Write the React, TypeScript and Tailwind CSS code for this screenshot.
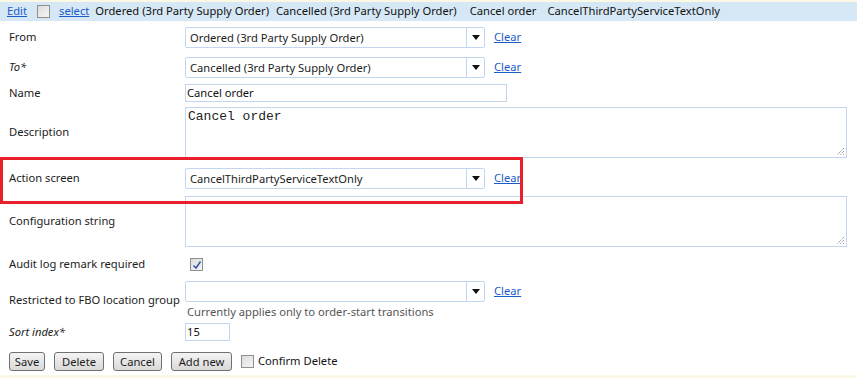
import React from 'react';

const font = { fontFamily: '"Noto Sans", "Open Sans", sans-serif' };

const Check = ({ checked = false }: { checked?: boolean }) => (
  <span className="inline-flex h-[13px] w-[13px] items-center justify-center border border-[#8f8f8f] bg-gradient-to-br from-[#dcdcdc] to-[#f6f6f6]">
    {checked && (
      <svg width="10" height="10" viewBox="0 0 10 10">
        <path d="M1.5 5.5 L4 8 L8.5 1.5" fill="none" stroke="#3a56a8" strokeWidth="1.6" />
      </svg>
    )}
  </span>
);

const ClearLink = () => <a className="ml-[9px] text-[11.2px] text-[#1a5cc8] underline">Clear</a>;

const Select = ({ value }: { value: string }) => (
  <div className="flex items-center">
    <div className="flex h-[21px] w-[300px] items-stretch rounded-[2px] border border-[#c3d6ef] bg-white">
      <span className="flex-1 truncate pl-[4px] text-[11.2px] leading-[19px] text-[#1c1c1c]">{value}</span>
      <span className="flex w-[18px] items-center justify-center border-l border-[#c3d6ef]">
        <svg width="8" height="5" viewBox="0 0 8 5">
          <path d="M0 0 H8 L4 5 Z" fill="#111" />
        </svg>
      </span>
    </div>
    <ClearLink />
  </div>
);

const Resize = () => (
  <svg className="absolute bottom-[1px] right-[1px]" width="9" height="9" viewBox="0 0 9 9">
    <path d="M8 1 L1 8 M8 4 L4 8 M8 7 L7 8" stroke="#777" strokeWidth="1" strokeDasharray="1 1" />
  </svg>
);

const TextArea = ({ value }: { value?: string }) => (
  <div className="relative h-[51px] w-[662px] border border-[#c3d6ef] bg-white">
    {value && (
      <span className="absolute left-[2px] top-[1px] text-[13px] leading-[16px] text-[#222]" style={{ fontFamily: '"Liberation Mono", monospace' }}>
        {value}
      </span>
    )}
    <Resize />
  </div>
);

const Row = ({ label, italic, mt, children }: { label: string; italic?: boolean; mt: string; children: React.ReactNode }) => (
  <div className={`flex items-center ${mt}`}>
    <div className={`w-[185px] whitespace-nowrap pl-[9px] text-[11.2px] text-[#1c1c1c] ${italic ? 'italic' : ''}`}>{label}</div>
    <div>{children}</div>
  </div>
);

const Btn = ({ label, w }: { label: string; w: string }) => (
  <button className={`h-[19px] ${w} rounded-[3px] border border-[#707070] bg-gradient-to-b from-[#f4f4f4] to-[#d9d9d9] text-center text-[11.2px] leading-[17px] text-[#1c1c1c]`}>
    {label}
  </button>
);

export default function App() {
  return (
    <div className="relative h-[378px] w-[857px] overflow-hidden bg-white" style={font}>
      <div className="h-[2px] bg-[#fbf9e6]" />
      <div className="flex h-[19px] items-center bg-[#d6e8f5] pl-[7px] text-[11.2px] text-[#111]">
        <a className="text-[#1a5cc8] underline">Edit</a>
        <span className="ml-[10px] flex"><Check /></span>
        <a className="ml-[9px] text-[#1a5cc8] underline">select</a>
        <span className="ml-[6px]">Ordered (3rd Party Supply Order)</span>
        <span className="ml-[7px]">Cancelled (3rd Party Supply Order)</span>
        <span className="ml-[13px]">Cancel order</span>
        <span className="ml-[11px]">CancelThirdPartyServiceTextOnly</span>
      </div>

      <Row label="From" mt="mt-[6px]">
        <Select value="Ordered (3rd Party Supply Order)" />
      </Row>
      <Row label="To*" italic mt="mt-[9px]">
        <Select value="Cancelled (3rd Party Supply Order)" />
      </Row>
      <Row label="Name" mt="mt-[6px]">
        <div className="h-[18px] w-[322px] border border-[#c3d6ef] pl-[1px] text-[11.2px] leading-[16px] text-[#111]">Cancel order</div>
      </Row>
      <Row label="Description" mt="mt-[5px]">
        <TextArea value="Cancel order" />
      </Row>
      <Row label="Action screen" mt="mt-[10px]">
        <Select value="CancelThirdPartyServiceTextOnly" />
      </Row>
      <Row label="Configuration string" mt="mt-[7px]">
        <TextArea />
      </Row>
      <Row label="Audit log remark required" mt="mt-[9px]">
        <div className="flex h-[17px] items-center pl-[5px]">
          <Check checked />
        </div>
      </Row>
      <Row label="Restricted to FBO location group" mt="mt-[8px]">
        <div className="flex flex-col">
          <Select value="" />
          <span className="mt-[2px] pl-[2px] text-[11.2px] leading-[16px] text-[#555]">Currently applies only to order-start transitions</span>
        </div>
      </Row>
      <Row label="Sort index*" italic mt="mt-[3px]">
        <div className="h-[18px] w-[45px] border border-[#c3d6ef] pl-[1px] text-[11.2px] leading-[16px] text-[#111]">15</div>
      </Row>

      <div className="mt-[11px] flex items-center gap-[9px] pl-[9px]">
        <Btn label="Save" w="w-[36px]" />
        <Btn label="Delete" w="w-[50px]" />
        <Btn label="Cancel" w="w-[49px]" />
        <Btn label="Add new" w="w-[61px]" />
        <span className="flex items-center gap-[4px] text-[11.2px] text-[#111]">
          <Check />
          Confirm Delete
        </span>
      </div>

      <div className="absolute bottom-0 left-0 h-[3px] w-full bg-[#fbf9e6]" />
      <div className="pointer-events-none absolute left-0 top-[157px] h-[47px] w-[523px] border-[3px] border-[#e8202a]" />
    </div>
  );
}
